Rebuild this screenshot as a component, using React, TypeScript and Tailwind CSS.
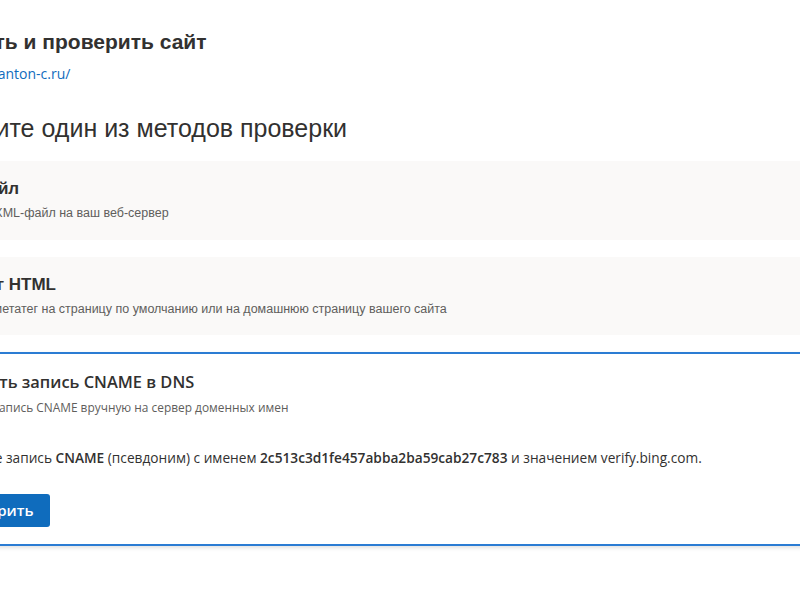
import React from "react";

const segoe = { fontFamily: '"Open Sans", "Noto Sans", sans-serif' };

export default function App() {
  return (
    <div className="w-[800px] h-[600px] overflow-hidden bg-white">
      <div className="ml-[-72px] w-[1000px] pt-[28px]">
        <h1 className="ml-[-12px] text-[21px] leading-[28px] font-bold text-[#323130] font-['Liberation_Sans',Arial,sans-serif]">
          Добавить и проверить сайт
        </h1>
        <div className="mt-[8px] ml-[22px] text-[14px] leading-[20px] text-[#0f6cbd] font-['Open_Sans',sans-serif]">
          https://anton-c.ru/
        </div>
        <h2 className="mt-[28px] ml-[-9px] text-[25px] leading-[32px] text-[#323130] font-['Liberation_Sans',Arial,sans-serif]">
          Выберите один из методов проверки
        </h2>
        <div className="mt-[17px] flex flex-col">
          <div className="h-[79px] bg-[#faf9f8] pl-[10px] pt-[17px] font-['Liberation_Sans',Arial,sans-serif]">
            <div className="ml-[-6px] text-[17px] leading-[22px] font-bold text-[#323130]">XML-файл</div>
            <div className="mt-[4px] ml-[-8px] text-[12.5px] leading-[18px] text-[#605e5c]">
              Отправьте XML-файл на ваш веб-сервер
            </div>
          </div>
          <div className="mt-[17px] h-[78px] bg-[#faf9f8] pl-[10px] pt-[17px] font-['Liberation_Sans',Arial,sans-serif]">
            <div className="text-[17px] leading-[22px] font-bold text-[#323130]">Метатег HTML</div>
            <div className="mt-[4px] ml-[-2px] text-[12.5px] leading-[18px] text-[#605e5c]">
              Добавьте метатег на страницу по умолчанию или на домашнюю страницу вашего сайта
            </div>
          </div>
          <div
            className="mt-[17px] border-y-2 border-[#2b7cd3] bg-white pl-[10px] pt-[16px] pb-[17px] shadow-[0_2px_4px_rgba(0,0,0,0.12)]"
            style={segoe}
          >
            <div className="ml-[-1px] text-[16.4px] leading-[24px] font-semibold text-[#323130]">
              Добавить запись CNAME в DNS
            </div>
            <div className="mt-[4px] ml-[-3px] text-[11.9px] leading-[18px] text-[#605e5c]">
              Добавьте запись CNAME вручную на сервер доменных имен
            </div>
            <div className="mt-[32px] ml-[1px] text-[13.7px] leading-[20px] text-[#323130]">
              Добавьте запись <span className="font-semibold">CNAME</span> (псевдоним) с именем{" "}
              <span className="font-semibold">2c513c3d1fe457abba2ba59cab27c783</span> и значением verify.bing.com.
            </div>
            <button className="mt-[26px] ml-[-5px] h-[33px] px-[17px] rounded-[3px] bg-[#0f6cbd] text-white text-[15px] font-semibold">
              Проверить
            </button>
          </div>
        </div>
      </div>
    </div>
  );
}
